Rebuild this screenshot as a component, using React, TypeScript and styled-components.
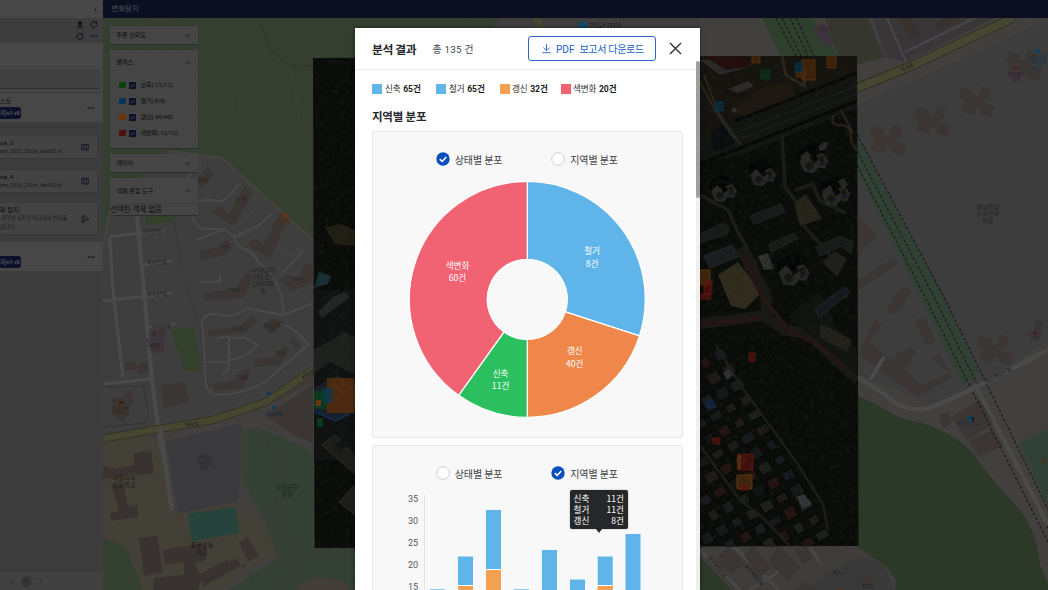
import React from 'react';
import styled, { createGlobalStyle } from 'styled-components';

const Global = createGlobalStyle`
  * { box-sizing: border-box; }
  body { margin: 0; overflow: hidden; font-family: Roboto, "Noto Sans CJK KR", sans-serif; }
`;

const Screen = styled.div`
  position: relative;
  display: flex;
  width: 1048px;
  height: 590px;
  overflow: hidden;
  background: #3c3c3c;
`;

/* ---------- sidebar ---------- */
const Sidebar = styled.aside`
  display: flex;
  flex-direction: column;
  width: 103px;
  height: 590px;
  overflow: hidden;
  background: #3c3c3c;
  color: #0d0d0d;
`;
const SideBar = styled.div<{ $h: number; $tone?: string; $pad?: string }>`
  display: flex;
  align-items: center;
  justify-content: flex-end;
  height: ${p => p.$h}px;
  flex: none;
  gap: 6px;
  padding: ${p => p.$pad ?? '0 5px'};
  background: ${p => p.$tone ?? '#474747'};
`;
const ToolGrid = styled.div`
  display: grid;
  grid-template-columns: 8px 8px;
  gap: 4px 6px;
`;
const SearchRow = styled.div`
  height: 27px;
  flex: none;
  padding: 2px 3px 3px 0;
  border-top: 1px solid #414141;
  border-bottom: 1px solid #3d3d3d;
  background: #474747;
`;
const SearchField = styled.div`
  height: 20px;
  background: #404040;
  border-bottom: 1px solid #303030;
`;
const TaskRow = styled.div<{ $h: number }>`
  display: flex;
  justify-content: space-between;
  height: ${p => p.$h}px;
  flex: none;
  padding: 4px 8.5px 0 0;
  background: #474747;
`;
const TaskMain = styled.div<{ $top?: number }>`
  display: flex;
  flex-direction: column;
  gap: 3px;
  padding-top: ${p => p.$top ?? 0}px;
  font-size: 6px;
  line-height: 7px;
`;
const Version = styled.span`
  display: block;
  width: 21px;
  height: 12px;
  border-radius: 0 3px 3px 0;
  background: #0c1129;
  color: #50545c;
  font-size: 5.8px;
  font-weight: 700;
  line-height: 12px;
  letter-spacing: -0.25px;
  white-space: nowrap;
`;
const DotsCell = styled.div`
  display: flex;
  padding-top: 7px;
`;
const FileCard = styled.div<{ $h: number; $mt: number }>`
  display: flex;
  align-items: center;
  justify-content: space-between;
  width: 97px;
  height: ${p => p.$h}px;
  margin-top: ${p => p.$mt}px;
  padding-right: 8px;
  flex: none;
  background: #434343;
  box-shadow: 0 0.5px 1px #363636;
`;
const FileText = styled.div`
  display: flex;
  flex-direction: column;
  gap: 1px;
  white-space: nowrap;
`;
const FileName = styled.span`
  font-size: 6.2px;
  line-height: 8px;
  letter-spacing: 0.1px;
`;
const FileSub = styled.span<{ $ls?: number }>`
  font-size: 5.2px;
  line-height: 7.6px;
  letter-spacing: ${p => p.$ls ?? 0.1}px;
  color: #181818;
`;
const Spacer = styled.div<{ $h?: number }>`
  flex: ${p => (p.$h ? `0 0 ${p.$h}px` : 1)};
`;
const Pager = styled.div`
  display: flex;
  align-items: center;
  height: 18px;
  padding-left: 9px;
  gap: 6.5px;
  background: #414141;
`;
const PageNo = styled.span`
  width: 11px;
  height: 11px;
  border-radius: 50%;
  background: #363636;
  font-size: 5.5px;
  line-height: 11px;
  text-align: center;
`;

/* ---------- workspace ---------- */
const Workspace = styled.main`
  position: relative;
  display: flex;
  flex-direction: column;
  flex: 1;
`;
const TopBar = styled.header`
  height: 18px;
  flex: none;
  padding-left: 8.5px;
  background: #0b0f21;
  color: #505359;
  font-size: 7.4px;
  line-height: 17px;
`;
const MapSvg = styled.svg`
  display: block;
  width: 945px;
  height: 572px;
`;
const PanelStack = styled.div`
  position: absolute;
  left: 7px;
  top: 26px;
  display: flex;
  flex-direction: column;
  gap: 6px;
  width: 88px;
`;
const Panel = styled.section<{ $h: number }>`
  height: ${p => p.$h}px;
  background: #454545;
  box-shadow: 0 0.5px 1px #2c2e2a;
  color: #0c0c0c;
  overflow: hidden;
`;
const PanelHead = styled.div<{ $h: number; $mb?: number }>`
  display: flex;
  align-items: center;
  justify-content: space-between;
  height: ${p => p.$h}px;
  margin-bottom: ${p => p.$mb ?? 0}px;
  padding: 0 8px 0 6.5px;
  font-size: 6.1px;
  line-height: 8px;
`;
const ClassRow = styled.div`
  display: flex;
  align-items: center;
  height: 16px;
  padding-left: 9px;
  font-size: 6.1px;
  line-height: 8px;
  letter-spacing: -0.12px;
`;
const Swatch = styled.i<{ $c: string }>`
  width: 6.5px;
  height: 6.5px;
  margin-right: 3.5px;
  background: ${p => p.$c};
`;
const Tick = styled.span`
  display: flex;
  width: 7px;
  height: 7px;
  margin-right: 4.5px;
  background: #0d122c;
`;
const EmptyNote = styled.div`
  height: 12px;
  border-top: 1px solid #3d3d3d;
  font-size: 7.5px;
  line-height: 11px;
  white-space: nowrap;
`;

/* ---------- dialog ---------- */
const Dialog = styled.div`
  position: absolute;
  left: 355px;
  top: 28px;
  width: 345px;
  height: 562px;
  overflow: hidden;
  background: #fff;
  box-shadow: 0 0 4px rgba(0, 0, 0, 0.5);
  color: #26282b;
`;
const DialogHead = styled.div`
  display: flex;
  align-items: center;
  height: 42px;
  padding: 0 18.5px 0 17px;
  border-bottom: 1px solid #ececec;
`;
const Title = styled.h1`
  margin: 2px 0 0;
  width: 60.5px;
  font-size: 11.8px;
  line-height: 20px;
  font-weight: 700;
  letter-spacing: -0.45px;
  white-space: nowrap;
`;
const Total = styled.span`
  margin-top: 2px;
  font-size: 9.8px;
  line-height: 20px;
  letter-spacing: 0.25px;
  color: #44474b;
`;
const Download = styled.button`
  display: flex;
  align-items: center;
  width: 127.5px;
  height: 25px;
  margin: 0 13px 0 auto;
  padding: 0 0 0 13px;
  border: 1px solid #2b67cb;
  border-radius: 3px;
  background: #fff;
  color: #2461c9;
  font: 400 10.1px/20px Roboto, "Noto Sans CJK KR", sans-serif;
  white-space: nowrap;
  svg { margin-right: 5px; flex: none; }
  span { margin: 2px 5px 0 0; letter-spacing: -0.05px; }
  span + span { margin-right: 0; letter-spacing: -0.38px; }
`;
const Legend = styled.div`
  display: flex;
  height: 14px;
  margin: 12px 0 0 17px;
`;
const LegendItem = styled.span<{ $w: number; $gap: number; $c: string }>`
  display: flex;
  align-items: center;
  width: ${p => p.$w}px;
  font-size: 8.6px;
  line-height: 14px;
  letter-spacing: -0.1px;
  white-space: nowrap;
  color: #2c2e31;
  &::before {
    content: '';
    width: 10px;
    height: 10px;
    margin-right: ${p => p.$gap}px;
    background: ${p => p.$c};
  }
  b { margin-left: 2.6px; color: #1c1d1f; }
`;
const Section = styled.h2`
  margin: 12px 0 5px 17px;
  height: 18px;
  font-size: 11.5px;
  line-height: 18px;
  font-weight: 700;
  letter-spacing: -0.25px;
`;
const Card = styled.div<{ $h: number }>`
  position: relative;
  width: 311px;
  height: ${p => p.$h}px;
  margin: 0 0 7px 17px;
  border: 1px solid #e6e6e6;
  border-radius: 3px;
  background: #f8f8f8;
`;
const Radios = styled.div`
  display: flex;
  gap: 49px;
  height: 14px;
  margin: 20px 0 0 62.5px;
`;
const Radio = styled.span`
  display: flex;
  align-items: center;
  gap: 5.3px;
  width: 66.5px;
  font-size: 10px;
  line-height: 14px;
  color: #3f4246;
  white-space: nowrap;
  letter-spacing: -0.15px;
  svg { flex: none; }
  em { font-style: normal; margin-top: 3px; }
`;
const Donut = styled.svg`
  display: block;
  margin-top: 13px;
  font-family: "Noto Sans CJK KR", sans-serif;
`;
const BarChart = styled.svg`
  display: block;
  margin-top: 11px;
  font-family: Roboto, sans-serif;
`;
const Tooltip = styled.div`
  position: absolute;
  left: 197px;
  top: 44px;
  width: 58px;
  height: 39px;
  padding: 3px 4px 3px 3.5px;
  border-radius: 2px;
  background: #262729;
  box-shadow: 0 0 2px rgba(0, 0, 0, 0.3);
  color: #fff;
  font: 400 8.6px/10.9px "Noto Sans CJK KR", sans-serif;
  &::after {
    content: '';
    position: absolute;
    left: 26px;
    top: 39px;
    border: 3px solid transparent;
    border-top: 4px solid #262729;
    border-bottom: 0;
  }
`;
const TipRow = styled.div`
  display: flex;
  justify-content: space-between;
`;
const ScrollTrack = styled.div`
  position: absolute;
  right: 0;
  top: 33px;
  width: 4px;
  height: 529px;
  background: #efefef;
`;
const ScrollThumb = styled.div`
  height: 137px;
  border-radius: 2px;
  background: #9e9e9e;
`;

const Chevron = ({ d, c = '#161616', s = 5 }: { d: 'up' | 'down' | 'left' | 'right'; c?: string; s?: number }) => {
  const paths = { up: 'M1 7 5 3 9 7', down: 'M1 3 5 7 9 3', left: 'M7 1 3 5 7 9', right: 'M3 1 7 5 3 9' };
  return (
    <svg width={s} height={s} viewBox="0 0 10 10">
      <path d={paths[d]} fill="none" stroke={c} strokeWidth="1.8" />
    </svg>
  );
};
const NAVY = '#0c0f1e';
const Reload = () => (
  <svg width="8" height="8" viewBox="0 0 16 16">
    <path d="M13 5.5A6 6 0 1 0 14 9" fill="none" stroke={NAVY} strokeWidth="1.8" />
    <path d="M14.500 1.500v5.500h-5.500z" fill={NAVY} />
  </svg>
);
const Upload = () => (
  <svg width="8" height="8" viewBox="0 0 16 16">
    <path d="M8 1 14 7h-3.500v5h-5V7H2zM2 13.500h12V15.500H2z" fill={NAVY} />
  </svg>
);
const Dots = () => (
  <svg width="8" height="8" viewBox="0 0 16 16">
    <g fill={NAVY}>
      <circle cx="3" cy="8" r="1.700" />
      <circle cx="8" cy="8" r="1.700" />
      <circle cx="13" cy="8" r="1.700" />
    </g>
  </svg>
);
const MapIcon = () => (
  <svg width="8" height="8" viewBox="0 0 16 16">
    <path d="M1.500 3 5.500 2l5 1.500 4-1v11l-4 1-5-1.500-4 1zM5.500 2v11M10.500 3.500v11" fill="none" stroke={NAVY} strokeWidth="1.500" />
  </svg>
);
const CompareIcon = () => (
  <svg width="8" height="8" viewBox="0 0 16 16">
    <path d="M2 1v14M2 2h7v3M2 14h7M4.500 5.500h3M4.500 8h4M4.500 11h4M9 8h6M12.500 5 15 8l-4 5" fill="none" stroke={NAVY} strokeWidth="1.500" />
  </svg>
);
const RadioMark = ({ on }: { on?: boolean }) => (
  <svg width="14" height="14" viewBox="0 0 14 14">
    {on ? (
      <>
        <circle cx="7" cy="7" r="6.700" fill="#0a50bd" />
        <path d="M3.800 7.100 6.200 9.400 10.300 5.100" fill="none" stroke="#fff" strokeWidth="1.500" />
      </>
    ) : (
      <circle cx="7" cy="7" r="6.300" fill="#fff" stroke="#cacaca" strokeWidth="0.900" />
    )}
  </svg>
);

/* ---------- map ---------- */
const BLD = '#3b3633';
const ROAD = '#4a4a4a';
const block = (x: number, y: number, w: number, h: number, a: number, fill: string) => (
  <rect x={x - w / 2} y={y - h / 2} width={w} height={h} fill={fill} transform={`rotate(${a} ${x} ${y})`} />
);

type L = [number, number, string, string?, number?, number?];
const labels: L[] = [
  [152, 233, '자곡로7길'], [157, 264, '자곡로7길'], [157, 296, '자곡로7길'], [161, 328, '자곡로7길'],
  [203, 182, '706동', '#232323'], [241, 201, '701동', '#232323'], [226, 249, '705동', '#232323'],
  [235, 292, '704동', '#232323'], [298, 281, '706동', '#232323'], [239, 330, '703동', '#232323'],
  [242, 379, '702동', '#232323'], [281, 355, '101동', '#232323'],
  [263, 272, 'LH강남더', '#202020', 6], [263, 279, '이파크7', '#202020', 6], [263, 286, '단지아파', '#202020', 6], [263, 293, '트', '#202020', 6],
  [192, 426, '자곡로', '#111', 5, -6], [309, 376, '자곡로', '#111', 5, -34],
  [284, 223, '폴바셋', '#4a2a10'], [272, 327, '세곡어린', '#2a241d'], [272, 331, '이집', '#2a241d'],
  [154, 342, '어시스티', '#30152f'], [154, 347, '어학원', '#30152f'],
  [121, 410, '못골한옥', '#2b241b'], [121, 415, '어린이도', '#2b241b'], [121, 420, '서관', '#2b241b'],
  [205, 459, 'LH강남', '#202020'], [205, 465, '8단지아', '#202020'], [205, 470, '파트', '#202020'],
  [124, 480, '서울자곡', '#1c1b17', 6.2], [124, 487, '초등학교', '#1c1b17', 6.2],
  [202, 547, '풍문고등', '#1c1b17', 6.2], [202, 554, '학교', '#1c1b17', 6.2],
  [287, 489, '안재근린', '#182a1a', 6.2], [287, 496, '공원', '#182a1a', 6.2], [274, 415, '못골마을', '#0e2446', 4.6],
  [988, 209, '강남한양', '#1d1d1d', 6.2], [988, 216, '수자인아', '#1d1d1d', 6.2], [988, 223, '파트', '#1d1d1d', 6.2],
  [908, 69, '자곡로', '#111', 5, -25], [824, 30, '더샵포레', '#332034'], [824, 35, '스트', '#332034'],
  [1038, 59, '강남한양', '#0e3048'], [1038, 64, '수자인아', '#0e3048'], [1038, 69, '파트', '#0e3048'],
  [1016, 76, '강남베르', '#361836'], [1016, 81, '빌앤', '#361836'], [1035, 340, '미용', '#361836'],
  [999, 377, '밤고개로21길', '#111', 5, -27], [968, 425, '세곡교회 앞', '#102f50', 4.8],
  [716, 568, '밤고개로21길', '#111', 4.6, 48], [753, 576, '밤고개로21길', '#111', 4.6, 48],
  [839, 575, '801동', '#232323'], [868, 588, '802동', '#232323'],
];

const hash = (n: number) => {
  const v = Math.sin(n * 91.17) * 43758.5453;
  return v - Math.floor(v);
};
const houses = Array.from({ length: 180 }, (_, i) => {
  const row = Math.floor(i / 15);
  const col = i % 15;
  return {
    x: 760 - row * 15 + col * 8.5 - 48,
    y: 340 + row * 8 + col * 15,
    w: 8 + hash(i) * 4,
    h: 7 + hash(i + 50) * 4,
    c: ['#141819', '#1a1c1c', '#111413', '#1e1e1b', '#231311', '#181a1f', '#1f1a16'][Math.floor(hash(i + 9) * 7)],
  };
}).filter(h => h.x > 700 && h.y < 546 && h.x < 728 + (h.y - 350) * 0.52 && h.y > 345);

const aptCluster = (x: number, y: number, s = 1) => (
  <g transform={`translate(${x} ${y}) scale(${s})`} key={`${x}-${y}`}>
    <path d="M-14-12 0-18 12-14 4-2-14-2z" fill="#040606" />
    <path d="M-13-2-7-8-2-3-1 1 4-3 2-7 8-9 13-2 10 5 4 4 0 9-9 8z" fill="#282926" />
    <path d="M-9 2-4-2 0 3-4 7zM4-5 8-7 10-2 6 1z" fill="#181512" />
    <path d="M-6 6 0 3M5 2 11 0" stroke="#151c25" strokeWidth="2" />
  </g>
);

const towers = (x: number, y: number) => (
  <g key={x} fill={BLD} transform={`translate(${x} ${y}) rotate(17)`}>
    <path d="M-19-6h13v5h6v-12h10v11h-4v4h13v12H6V9H1v8h-14V5h-6z" />
  </g>
);

const MapView = () => (
  <MapSvg viewBox="103 18 945 572">
    <defs>
      <pattern id="trees" width="17" height="15" patternUnits="userSpaceOnUse">
        <path d="M3 4.500q1-2 2 0M12 11.500q1-2 2 0" fill="none" stroke="#2c3729" strokeWidth="1" />
      </pattern>
      <filter id="foliage" x="0" y="0" width="100%" height="100%" colorInterpolationFilters="sRGB">
        <feTurbulence type="fractalNoise" baseFrequency="0.2" numOctaves="4" seed="8" />
        <feColorMatrix values="0 0 0 0 .12  0 0 0 0 .13  0 0 0 0 .10  0 2 0 0 -.85" />
      </filter>
      <clipPath id="aerial"><path d="M313 58 857 56 858.500 546 314.500 548z" /></clipPath>
    </defs>
    <rect x="103" y="18" width="945" height="572" fill="#42403f" />

    {/* west side */}
    <path d="M103 18H500L470 60 313 240 222 158 170 150 148 172 112 200 103 237z" fill="#343f2f" />
    <path d="M103 18H500L470 60 313 240 222 158 170 150 148 172 112 200 103 237z" fill="url(#trees)" />
    <path d="M170 152 222 159 313 242V370L265 400 200 420 103 436V237L112 200 148 173z" fill="#3e3e3e" />
    <path d="M146 215H174V222L146 225zM171 329 194 327 201 370 184 371z" fill="#33402c" />
    <path d="M103 245 110 215 112 195M170 151 222 158 313 240" fill="none" stroke="#484340" strokeWidth="2" />
    <path d="M228 18 252 45 268 65 262 78 240 94 238 125 208 153M252 45 290 67 296 100 300 122 313 136M135 25Q160 15 180 22" fill="none" stroke="#453d33" strokeWidth="0.900" />
    <path d="M260 22 270 48 290 67 313 65" fill="none" stroke="#2c332a" strokeWidth="0.700" />
    <path d="M174 222 182 270 187 285 200 330 209 390" fill="none" stroke="#343434" strokeWidth="0.700" />
    <g fill="none" stroke={ROAD} strokeLinejoin="round">
      <path d="M137 215 143 280 152 380 160 440 172 511" strokeWidth="4.200" />
      <path d="M110 240 113 290 123 378M110 246Q107 237 114 236L165 231M140 265 172 261M103 301 172 293M103 384 152 379M148 327 176 324M145 297 165 295" strokeWidth="3.200" />
      <path d="M187 205Q205 198 216 201 225 204 239 183M192 216Q197 229 204 229L223 229 235 237 260 225 272 213M196 240 223 230M235 237Q234 246 245 249 256 254 258 263 284 280 283 315L247 308Q233 320 218 314 206 313 202 320L206 385Q209 395 220 395 246 393 265 382L308 345M283 315 313 303M284 324Q300 332 308 345M206 362H229L229 338H246L257 345Q248 358 229 360M200 282H220L220 275M283 272 305 249M185 180 202 162M218 338 229 337M229 360 228 370 222 375" strokeWidth="2" />
      <path d="M240 224 258 205 263 214M279 246 291 257 300 248" strokeWidth="0.900" />
    </g>
    <g fill={BLD}>
      <path d="M197 180 207 167 214 173 201 190zM211 213 219 206 229 214 245 186 253 192 234 226zM247 246 253 238 264 244 280 213 288 218 270 259zM200 251 222 246 225 239 231 244 226 255 201 260zM204 293 236 289 246 272 254 276 243 298 205 301zM279 280 287 275 298 279 305 263 313 266V282L292 292zM208 330 241 327 252 315 258 321 247 332 209 337zM254 359 276 356 284 344 290 349 279 365 255 367zM213 384 237 380 247 368 251 372 242 388 214 391zM290 341 294 337 301 347 296 352zM263 326 274 318 282 322 271 334z" />
      <path d="M161 385 186 382 189 403 164 408zM149 331 165 329V338H150zM150 344 164 343V352L151 353zM124 363 136 361V370H125zM137 364 148 362 149 372 138 374zM112 398 125 397V391L132 390 133 403 129 406V415H112z" />
      <path d="M265 416 313 385V443L293 435z" />
    </g>
    <path d="M103 440 155 437 161 452 173 515 237 503 262 522 280 552 250 570 214 590H103z" fill="#434037" />
    <path d="M103 538 125 546 143 590H103z" fill="#33402f" />
    <path d="M103 434 158 427 212 419 262 403 313 368V383L268 405 210 425 103 442z" fill="#3e3a37" />
    <path d="M103 438.500 159 429 213 420 266 402 313 370" fill="none" stroke="#2e2f20" strokeWidth="8" />
    <path d="M103 438.500 159 429 213 420 266 402 313 370" fill="none" stroke="#464731" strokeWidth="6.600" />
    <path d="M160 427 172 511" stroke={ROAD} strokeWidth="4.200" />
    <path d="M166 441 242 423V470L237 502 178 513z" fill="#3a3a3c" />
    <path d="M188 514 236 507 239 533 192 541z" fill="#25433a" />
    <g fill="#383230">
      <path d="M103 466 116 469 134 465V453L151 451 154 473 137 476V473L103 479zM111 484 124 486 128 507 137 505 138 517 111 521 110 513 119 511zM139 538 157 536 163 572 144 576zM163 550 206 543V560L194 563Q200 572 201 580L198 590H153L154 578 184 575 184 562 165 565zM229 562 235 558 243 568 248 560 239 543 247 536 259 556 233 570zM198 575 227 560 233 570 204 586z" />
    </g>
    <path d="M243 430 258 427 313 452V548H355V590H228L278 558 265 520 243 481z" fill="#334033" />
    <path d="M243 430 258 427 313 452V548H355V590H228L278 558 265 520 243 481z" fill="url(#trees)" />
    <path d="M250 415 276 455 287 480 277 500 282 525 304 555 278 590M304 555H355" fill="none" stroke="#453633" strokeWidth="0.700" strokeDasharray="1.500 2" />
    <path d="M296 590Q302 578 320 578 345 578 350 590z" fill="#433d3a" />
    <path d="M103 387 143 386 148 410M148 414 145 423 103 427" fill="none" stroke="#2d2d2d" strokeWidth="0.700" />
    <path d="M282 213h5v4h-1v2h-3v-2h-1z" fill="#5e3712" />
    <path d="M119 401h5v3h-5z" fill="#39220d" />
    <path d="M267 392h4v3h-4zM272 406h4v3h-4z" fill="#0e3a58" />
    <circle cx="154" cy="334" r="1.300" fill="#42123f" />

    {/* strip above the dialog */}
    <path d="M500 18H700V28H497z" fill="#3f3e3e" />
    <path d="M536 18 541 30" stroke="#464731" strokeWidth="8" />
    <rect x="579" y="22" width="8" height="7" fill="#0d4a6c" />
    <text x="605" y="30" fontSize="9" fill="#191919" stroke="#4a4a4a" strokeWidth="0.600" paintOrder="stroke" textAnchor="middle">강남코아</text>

    {/* east side */}
    <path d="M825 18H868L884 57 857 65V56H838z" fill="#35362e" />
    <path d="M762 18H813L838 56H781z" fill="#2f3f2e" />
    <path d="M812 30 824 23 836 44 826 46z" fill="#3c333b" />
    <path d="M873 18H995L905 62 885 57z" fill="#393638" />
    <path d="M887 18 907 64M905 52 975 18" stroke="#47464a" strokeWidth="2" fill="none" />
    <path d="M897 18 912 40 921 34 911 18zM935 28 942 18H962L940 31z" fill="#38312e" />
    <path d="M857 106 1048 20V340L1000 373 930 405 858 374z" fill="#3d3d3d" />
    <path d="M857 88 909 67 1013 18" fill="none" stroke="#2d2d1f" strokeWidth="9.500" />
    <path d="M857 88 909 67 1013 18" fill="none" stroke="#464731" strokeWidth="7.800" />
    <path d="M857 79 900 60M857 99 910 78 1040 18M1048 70 1015 100 990 140 977 172 980 220 1003 298M977 172 940 196 858 258M1000 290 1013 312 1048 322" fill="none" stroke="#483735" strokeWidth="0.600" strokeDasharray="1.500 1.800" />
    {towers(889, 137)}
    {towers(933, 118)}
    {towers(978, 99)}
    {towers(1024, 62)}
    {towers(996, 347)}
    <g fill={BLD}>
      <path d="M858 214 877 235 858 257zM858 281 894 257 898 264 858 291zM892 297 905 285 911 291 899 301zM886 310 900 290 911 291 897 315zM858 355 875 319 882 324 870 342 890 360 909 346 916 352 905 370 922 386 950 373 931 359 940 354 952 378 918 397zM914 321 924 317 936 341 927 347zM939 415 948 412 952 423 943 429zM951 417 980 400 995 423 967 440zM969 441 993 430 1003 446 979 457zM1025 335 1034 330 1036 320 1043 322 1040 339z" />
    </g>
    <path d="M857 133 872 165 944 297 979 374 963 385 917 290 857 170z" fill="#304034" />
    <path d="M1048 430 1019 443 1048 505z" fill="#304238" />
    <g fill="none" stroke="#1b1b1b" strokeWidth="1.200" strokeDasharray="3 2">
      <path d="M857 134 944 297 1048 509M857 151 934 297 1048 528M857 165 923 293 1048 542" />
      <path d="M776 18 796 56M782 18 801 56M790 18 808 56M796 18 814 56" />
    </g>
    <path d="M858 377 885 395Q904 412 925 409 944 405 1048 350M975 384 1048 525M870 380 884 357" fill="none" stroke={ROAD} strokeWidth="4.300" />
    <path d="M858 396Q875 403 898 417L922 423Q960 436 974 455 990 478 1020 510 1036 530 1040 565L1048 584V590H895L896 581 888 568 858 551z" fill="#2c3828" />
    <path d="M858 396Q875 403 898 417L922 423Q960 436 974 455 990 478 1020 510 1036 530 1040 565L1048 584V590H895L896 581 888 568 858 551z" fill="url(#trees)" />
    <path d="M700 547H858L888 568 896 590H700z" fill="#3f3d3c" />
    <path d="M700 557 732 590H700z" fill="#2c3828" />
    <path d="M700 550 740 590M734 547 779 590M810 547 820 563M750 590 786 567" fill="none" stroke="#484848" strokeWidth="3" />
    <path d="M717 560 728 547 744 563 732 574zM745 556 752 547 770 568 760 577zM769 561 779 547 800 567 787 580zM795 550 806 547 812 558 803 563z" fill={BLD} stroke="#302c29" strokeWidth="0.500" />
    <path d="M817 580 844 562 862 556 884 566 894 590H812z" fill="#393939" />
    <path d="M795 588 805 581 815 587V590H795zM857 580 864 571 876 577 871 590zM842 568 851 563 856 568 847 574z" fill={BLD} />
    <path d="M968 416h4v5h-4z" fill="#0c4063" />
    <path d="M973 417v5M971.500 418.500h3" stroke="#0c0c0c" />
    <path d="M1036 49h4v4h-4z" fill="#0c4063" />
    <circle cx="1015.500" cy="68" r="1.300" fill="#48143f" />
    <circle cx="1035" cy="333" r="1.800" fill="#48143f" />
    <path d="M1042 459h4v4h-4zM839 587h3v3h-3z" fill="#4d310f" />

    {labels.map(([x, y, t, fill = '#131313', size = 4.6, rot = 0], i) => (
      <text key={i} x={x} y={y} fill={fill} fontSize={size} textAnchor="middle" transform={`rotate(${rot} ${x} ${y})`}>{t}</text>
    ))}

    {/* aerial photograph layer */}
    <g clipPath="url(#aerial)">
      <rect x="313" y="56" width="546" height="492" fill="#0a0c09" />
      <path d="M700 56H857V90L700 160z" fill="#15130f" />
      <path d="M313 290H355V460H313z" fill="#101212" />
      <path d="M325 228 340 224 355 230V246L335 244z" fill="#211e14" />
      <path d="M314 288 319 272 331 276 328 284z" fill="#1b3035" />
      <path d="M333 297 345 292 350 297 322 318 318 312z" fill="#232725" />
      <path d="M313 350 345 332 355 338V375L330 362 313 374z" fill="#1f211f" />
      <path d="M322 445 335 435 355 456V474zM339 502 355 485V515z" fill="#1d1d19" stroke="#302f28" strokeWidth="1" />
      <path d="M335 444 342 441 347 446 340 451z" fill="#111416" />
      <path d="M314 388 338 375 355 385V412L335 420 314 412z" fill="#17202a" />

      <path d="M700 145 735 122 857 79V108L742 155 700 164z" fill="#121412" />
      <path d="M735 133 857 86M740 139 857 94" stroke="#22211c" strokeWidth="1" />
      <path d="M700 164 857 101M735 121 857 73" stroke="#060806" strokeWidth="3" />
      <path d="M711 132 727 122 736 143 714 152z" fill="#0a0d0f" />
      <path d="M700 82 716 112 735 140M704 75 718 112 741 145" fill="none" stroke="#29271f" strokeWidth="2" />
      <path d="M700 60 730 58 753 66 720 75zM728 89 748 81 754 86 738 93z" fill="#2d2a28" />
      <path d="M704 56 748 58 750 67 726 70z" fill="#240d0e" />
      <path d="M732 110 760 88 790 82 795 96 744 116z" fill="#1e1712" />
      <path d="M782 56 786 75 804 86 806 66" fill="none" stroke="#2b271b" strokeWidth="3" />
      <circle cx="734" cy="110" r="2.500" fill="#32312d" />
      <path d="M834 115Q828 126 842 125 851 126 851 138 852 145 857 151M841 110 853 133" fill="none" stroke="#2c211c" strokeWidth="2.200" />
      <path d="M782 135 785 187 795 200 800 221 820 244 835 260M700 195 728 210 737 230 753 260 771 300M795 190 813 184 820 201 846 213" fill="none" stroke="#1c1c18" strokeWidth="3.600" />
      {aptCluster(814, 163, 1.100)}
      {aptCluster(836, 196, 1.100)}
      {aptCluster(763, 177)}
      {aptCluster(724, 193)}
      {aptCluster(794, 275, 1.200)}
      <path d="M829 142h-5l-6 5 2 4 5-1zM800 157 807 151 811 156 804 161zM822 191 830 185 833 190 826 195zM838 181 844 178 848 185 842 188z" fill="#282926" />
      <path d="M750 216 781 204 785 212 754 224zM769 244 794 233 797 239 771 252zM700 234 723 223 729 227 727 234 700 243zM816 247 840 236 853 242 851 254 841 246 820 256zM829 298 846 290 848 296 834 303z" fill="#181b1a" stroke="#2a2a25" strokeWidth="0.800" />
      <path d="M795 202 806 194 822 219 800 226z" fill="#27241a" />
      <path d="M822 262 835 251 847 259 837 277z" fill="#211f19" />
      <path d="M704 256 732 245 739 256 710 268z" fill="#1a1e22" stroke="#272a28" strokeWidth="1" />
      <path d="M718 275 738 262 762 292 745 309 731 306z" fill="#312d1e" />
      <path d="M758 256 768 253 774 269 764 270z" fill="#30302e" />
      <path d="M740 248 765 292 768 319 784 330 808 333 858 380M700 324 768 315" fill="none" stroke="#191815" strokeWidth="11" />
      <path d="M744 254 755 282 764 300M765 300 788 330 820 346 850 370M700 324 760 318" fill="none" stroke="#261516" strokeWidth="4" />
      <path d="M789 317 819 290 838 330 858 350V376L806 332z" fill="#10130f" />
      <path d="M815 309 845 287 850 292 819 318z" fill="#151920" stroke="#232927" strokeWidth="1" />
      <path d="M820 324 838 332 852 340 847 352 820 338z" fill="#22211b" />
      {houses.map((h, i) => (
        <g key={i}>
          {block(h.x, h.y, h.w + 2, h.h + 2, -30, '#060806')}
          {block(h.x, h.y, h.w, h.h, -30, h.c)}
        </g>
      ))}
      <path d="M716 345 740 385 795 460 823 504 828 530M700 446 740 500 760 515 790 546" fill="none" stroke="#1f1f1a" strokeWidth="2.200" />
      <path d="M704 402 712 398 717 407 708 411z" fill="#12243a" />
      <path d="M796 497 804 494 812 504 803 509z" fill="#34373a" />
      <path d="M723 373 729 369 733 375 727 380z" fill="#303235" />
      <rect x="313" y="56" width="546" height="492" filter="url(#foliage)" opacity="0.500" />

      <path d="M327 378H355V413H327z" fill="#562d0d" opacity="0.850" />
      <path d="M330 382 355 405M338 378 355 393" stroke="#653a14" strokeWidth="0.700" />
      <path d="M313 391h14v18h-14zM317 418h6v9h-6z" fill="#0b3f1e" opacity="0.800" />
      <path d="M323 388h10v15h-10z" fill="#073a55" opacity="0.700" />
      <path d="M316 400h5v6h-5z" fill="#66380c" />
      <path d="M313 411 335 421 349 414" fill="none" stroke="#102f50" strokeWidth="1.500" />
      <g strokeWidth="0.800" fillOpacity="0.700">
        <path d="M802 60h13v20h-13zM827 56h9v12h-9zM752 56h8v7h-8zM796 72h9v5h-9z" fill="#4c280c" stroke="#5d320c" />
        <path d="M795 63h7v9h-7zM716 102h7v9h-7z" fill="#06304a" stroke="#093248" />
        <path d="M761 70h9v9h-9z" fill="#0a331a" stroke="#0c381c" />
        <path d="M700 270h10v15h-10zM737 475h15v14h-15z" fill="#51300f" stroke="#623c12" />
        <path d="M704 281h8v13h-8zM700 294h10v5h-10zM738 454h15v16h-15zM749 353h6v8h-6zM713 438h7v6h-7zM741 485h7v5h-7z" fill="#571110" stroke="#661611" />
        <path d="M737 455h4v14h-4z" fill="#5b340e" stroke="none" />
      </g>
    </g>
  </MapSvg>
);

/* ---------- charts ---------- */
const rad = (d: number) => ((d - 90) * Math.PI) / 180;
const slice = (a: number, b: number) => {
  const p = (r: number, d: number) => `${120 + r * Math.cos(rad(d))} ${120 + r * Math.sin(rad(d))}`;
  const big = b - a > 180 ? 1 : 0;
  return `M${p(118, a)}A118 118 0 ${big} 1 ${p(118, b)}L${p(40, b)}A40 40 0 ${big} 0 ${p(40, a)}Z`;
};
const slices = [
  { from: 0, to: 108, fill: '#5fb5e9', name: '철거', n: '8건', x: 184.800, y: 75 },
  { from: 108, to: 180, fill: '#f0874a', name: '갱신', n: '40건', x: 167.500, y: 175 },
  { from: 180, to: 215.600, fill: '#2bbf60', name: '신축', n: '11건', x: 93.300, y: 197.300 },
  { from: 215.600, to: 360, fill: '#f16273', name: '색변화', n: '60건', x: 50.200, y: 89.300 },
];
const bars = [
  { x: 57, top: 98.300 }, { x: 85, top: 65.500, split: 94.500 }, { x: 113, top: 19, split: 78.500 }, { x: 141, top: 98.300 },
  { x: 169, top: 59 }, { x: 197, top: 88.500 }, { x: 224.700, top: 65.500, split: 94.500 }, { x: 252.500, top: 43 },
];
const classes = [
  ['#0d400f', '신축( 11/11)'], ['#0a3554', '철거( 8/8)'], ['#6a3607', '갱신( 40/40)'], ['#520f10', '색변화( 12/12)'],
];

export default function App() {
  return (
    <>
      <Global />
      <Screen>
        <Sidebar>
          <SideBar $h={18}><Chevron d="left" /></SideBar>
          <SideBar $h={25} $tone="#3d3d3d" $pad="0 5px 1px"><ToolGrid><Upload /><Reload /><Reload /><Dots /></ToolGrid></SideBar>
          <SideBar $h={23} />
          <SearchRow><SearchField /></SearchRow>
          <TaskRow $h={29}>
            <TaskMain><span>스트</span><Version>지)v1-r0</Version></TaskMain>
            <DotsCell><Dots /></DotsCell>
          </TaskRow>
          <FileCard $h={22} $mt={14}>
            <FileText><FileName>oe_3</FileName><FileSub>am_2022_25cm_test03.tif</FileSub></FileText>
            <MapIcon />
          </FileCard>
          <FileCard $h={22} $mt={12}>
            <FileText><FileName>oe_4</FileName><FileSub>am_2023_25cm_test03.tif</FileSub></FileText>
            <MapIcon />
          </FileCard>
          <FileCard $h={31} $mt={11}>
            <FileText>
              <FileName>화 탐지</FileName>
              <FileSub $ls={0}>&nbsp;지역의 사진을 비교하여 변화를</FileSub>
              <FileSub $ls={0}>합니다.</FileSub>
            </FileText>
            <CompareIcon />
          </FileCard>
          <Spacer $h={8} />
          <TaskRow $h={29}>
            <TaskMain $top={10}><Version>지)v1-r0</Version></TaskMain>
            <DotsCell><Dots /></DotsCell>
          </TaskRow>
          <Spacer />
          <Pager><Chevron d="left" c="#262626" /><PageNo>1</PageNo><Chevron d="right" c="#262626" /></Pager>
        </Sidebar>

        <Workspace>
          <TopBar>변화탐지</TopBar>
          <MapView />
          <PanelStack>
            <Panel $h={18}><PanelHead $h={18}>추론 신뢰도<Chevron d="down" /></PanelHead></Panel>
            <Panel $h={98}>
              <PanelHead $h={24} $mb={3}>클래스<Chevron d="up" /></PanelHead>
              {classes.map(([c, t]) => (
                <ClassRow key={t}>
                  <Swatch $c={c} />
                  <Tick><svg width="7" height="7" viewBox="0 0 7 7"><path d="M1.300 3.500 2.900 5 5.700 2" fill="none" stroke="#4b4b4b" strokeWidth="0.900" /></svg></Tick>
                  {t}
                </ClassRow>
              ))}
            </Panel>
            <Panel $h={18}><PanelHead $h={18}>레이어<Chevron d="down" /></PanelHead></Panel>
            <Panel $h={37}>
              <PanelHead $h={25}>객체 편집 도구<Chevron d="up" /></PanelHead>
              <EmptyNote>선택된 객체 없음</EmptyNote>
            </Panel>
          </PanelStack>
        </Workspace>

        <Dialog>
          <DialogHead>
            <Title>분석 결과</Title>
            <Total>총 135 건</Total>
            <Download>
              <svg width="9" height="11" viewBox="0 0 9 11"><path d="M4.500 1v6.500M1.300 4.500l3.200 3.200 3.200-3.200M.3 9.700h8.400" fill="none" stroke="#2461c9" strokeWidth="0.900" /></svg>
              <span>PDF</span>
              <span>보고서 다운로드</span>
            </Download>
            <svg width="13" height="13" viewBox="0 0 13 13"><path d="M1 1 12 12M12 1 1 12" stroke="#2e3033" strokeWidth="1.400" /></svg>
          </DialogHead>
          <Legend>
            <LegendItem $w={64} $gap={3} $c="#5fb5e9">신축<b>65건</b></LegendItem>
            <LegendItem $w={64} $gap={3} $c="#5fb5e9">철거<b>65건</b></LegendItem>
            <LegendItem $w={61} $gap={2} $c="#f3a052">갱신<b>32건</b></LegendItem>
            <LegendItem $w={64} $gap={2} $c="#f16273">색변화<b>20건</b></LegendItem>
          </Legend>
          <Section>지역별 분포</Section>
          <Card $h={307}>
            <Radios>
              <Radio><RadioMark on /><em>상태별 분포</em></Radio>
              <Radio><RadioMark /><em>지역별 분포</em></Radio>
            </Radios>
            <Donut width="309" height="240" viewBox="-34.3 -0.4 309 240">
              {slices.map(s => <path key={s.name} d={slice(s.from, s.to)} fill={s.fill} stroke="#fff" strokeWidth="1.300" />)}
              {slices.map(s => (
                <text key={s.name} fill="#fff" fontSize="8.600" textAnchor="middle">
                  <tspan x={s.x} y={s.y}>{s.name}</tspan>
                  <tspan x={s.x} y={s.y + 12.300}>{s.n}</tspan>
                </text>
              ))}
            </Donut>
          </Card>
          <Card $h={307}>
            <Radios>
              <Radio><RadioMark /><em>상태별 분포</em></Radio>
              <Radio><RadioMark on /><em>지역별 분포</em></Radio>
            </Radios>
            <BarChart width="309" height="120" viewBox="0 4 309 120">
              <path d="M51.500 8V124" stroke="#e4e4e4" />
              {[35, 30, 25, 20, 15].map((n, i) => (
                <text key={n} x="45" y={15.300 + i * 21.900} fontSize="9" fill="#55585c" textAnchor="end">{n}</text>
              ))}
              <g transform="translate(0 4)">
                {bars.map(b => (
                  <g key={b.x}>
                    <rect x={b.x} y={b.top} width="15" height={124 - b.top} fill="#5fb5e9" />
                    {b.split && <rect x={b.x} y={b.split} width="15" height="40" fill="#f3a052" />}
                    {b.split && <rect x={b.x} y={b.split - 0.500} width="15" height="1" fill="#fff" />}
                  </g>
                ))}
              </g>
            </BarChart>
            <Tooltip>
              <TipRow><span>신축</span><span>11건</span></TipRow>
              <TipRow><span>철거</span><span>11건</span></TipRow>
              <TipRow><span>갱신</span><span>8건</span></TipRow>
            </Tooltip>
          </Card>
          <ScrollTrack><ScrollThumb /></ScrollTrack>
        </Dialog>
      </Screen>
    </>
  );
}
